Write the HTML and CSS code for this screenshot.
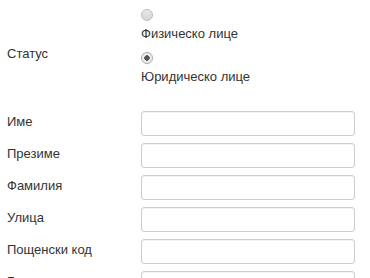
FILE: index.html
```html
<!DOCTYPE html>
<html lang="bg">
<head>
  <meta charset="UTF-8">
  <title>Данни</title>
  <link rel="stylesheet" href="styles.css">
</head>
<body>
  <form class="form">
    <div class="row status-row">
      <label class="lbl">Статус</label>
      <div class="radios">
        <label class="opt"><input type="radio" name="status" value="fiz"><span>Физическо лице</span></label>
        <label class="opt"><input type="radio" name="status" value="jur" checked><span>Юридическо лице</span></label>
      </div>
    </div>

    <div class="row"><label class="lbl" for="ime">Име</label><input id="ime" type="text"></div>
    <div class="row"><label class="lbl" for="prezime">Презиме</label><input id="prezime" type="text"></div>
    <div class="row"><label class="lbl" for="familia">Фамилия</label><input id="familia" type="text"></div>
    <div class="row"><label class="lbl" for="ulica">Улица</label><input id="ulica" type="text"></div>
    <div class="row"><label class="lbl" for="pk">Пощенски код</label><input id="pk" type="text"></div>
    <div class="row"><label class="lbl" for="grad">Град</label><input id="grad" type="text"></div>
  </form>
</body>
</html>
```

FILE: styles.css
```css
body { margin: 0; background: #fff; font-family: "Liberation Sans", Arial, sans-serif; font-size: 13px; color: #333; }
.form { padding: 9px 15px 0 7px; }
.row { display: grid; grid-template-columns: 134px 214px; align-items: center; margin-bottom: 7px; }
.lbl { line-height: 15px; align-self: start; padding-top: 3px; }
.status-row { margin-bottom: 27px; }
.status-row .lbl { align-self: center; padding-top: 14px; }
.radios { display: flex; flex-direction: column; gap: 11px; }
.opt { display: flex; flex-direction: column; align-items: flex-start; line-height: 15px; }
.opt input { appearance: none; -webkit-appearance: none; width: 12px; height: 12px; margin: 0 0 5px 0; border-radius: 50%; border: 1px solid #bdbdbd; background: linear-gradient(#e8e8e8, #d6d6d6); }
.opt input:checked { background: radial-gradient(circle, #555 0, #555 2.5px, #f2f2f2 3px, #e2e2e2 100%); border-color: #aaa; }
.row input[type="text"] { box-sizing: border-box; height: 25px; width: 214px; margin: 0; border: 1px solid #ccc; border-radius: 3px; padding: 4px 6px; font: inherit; box-shadow: inset 0 1px 1px rgba(0,0,0,0.05); }
```
